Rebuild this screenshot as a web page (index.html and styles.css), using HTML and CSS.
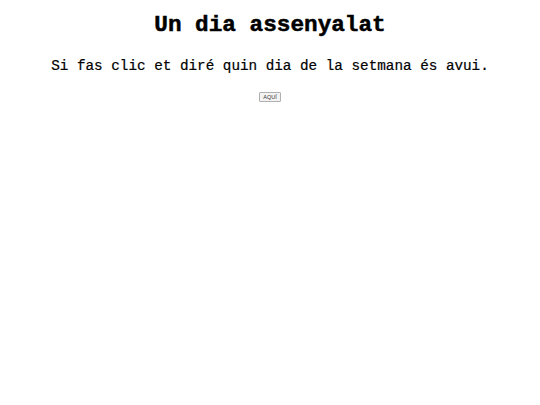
FILE: index.html
```html
<!DOCTYPE html>
<html lang="ca">
<head>
<meta charset="utf-8">
<title>Un dia assenyalat</title>
<link rel="stylesheet" href="styles.css">
</head>
<body>
<main class="page">
  <h1 class="title">Un dia assenyalat</h1>
  <p class="lead">Si fas clic et diré quin dia de la setmana és avui.</p>
  <button class="btn" type="button">AQUÍ</button>
</main>
</body>
</html>
```
FILE: styles.css
```css
html, body {
  margin: 0;
  padding: 0;
  background: #ffffff;
}
.page {
  display: flex;
  flex-direction: column;
  align-items: center;
  padding-top: 10px;
  font-family: "Liberation Mono", "DejaVu Sans Mono", monospace;
  color: #000000;
}
.title {
  margin: 0;
  font-size: 22.7px;
  line-height: 30px;
  font-weight: bold;
  -webkit-text-stroke: 0.5px #000;
}
.lead {
  margin: 16px 0 0 0;
  font-size: 14.3px;
  line-height: 20px;
  -webkit-text-stroke: 0.2px #000;
}
.btn {
  margin-top: 16px;
  height: 10px;
  padding: 0 3px;
  font-family: "Liberation Sans", Arial, sans-serif;
  font-size: 5.5px;
  line-height: 8px;
  color: #333;
  background: #f3f3f3;
  border: 1px solid #b0b0b0;
  border-radius: 1px;
}
```
